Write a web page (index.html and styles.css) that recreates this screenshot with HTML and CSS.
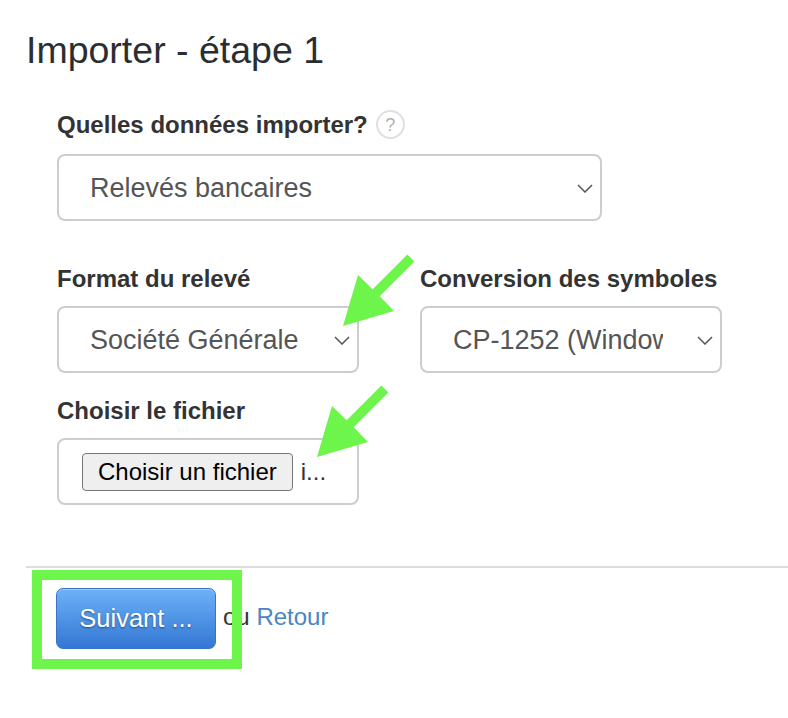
FILE: index.html
```html
<!DOCTYPE html>
<html lang="fr">
<head>
<meta charset="utf-8">
<title>Importer - étape 1</title>
<link rel="stylesheet" href="styles.css">
</head>
<body>
<div class="page">
  <h1 class="title">Importer - étape 1</h1>
  <form class="form">
    <div class="group group-first">
      <div class="label">Quelles données importer? <span class="help">?</span></div>
      <div class="select-wrap wide">
        <select class="select"><option>Relevés bancaires</option></select>
        <svg class="chev" viewBox="0 0 16 9" width="16" height="9"><path d="M1 1 L8 8 L15 1" fill="none" stroke="#555" stroke-width="1.5"/></svg>
      </div>
    </div>
    <div class="row">
      <div class="group col">
        <div class="label">Format du relevé</div>
        <div class="select-wrap">
          <select class="select"><option>Société Générale</option></select>
          <svg class="chev" viewBox="0 0 16 9" width="16" height="9"><path d="M1 1 L8 8 L15 1" fill="none" stroke="#555" stroke-width="1.5"/></svg>
        </div>
      </div>
      <div class="group col">
        <div class="label">Conversion des symboles</div>
        <div class="select-wrap">
          <select class="select"><option>CP-1252 (Windows-1252)</option></select>
          <svg class="chev" viewBox="0 0 16 9" width="16" height="9"><path d="M1 1 L8 8 L15 1" fill="none" stroke="#555" stroke-width="1.5"/></svg>
        </div>
      </div>
    </div>
    <div class="group">
      <div class="label">Choisir le fichier</div>
      <div class="file-box">
        <button type="button" class="file-btn">Choisir un fichier</button>
        <span class="file-name">i...</span>
      </div>
    </div>
  </form>
  <div class="divider"></div>
  <div class="actions">
    <button type="button" class="btn-primary">Suivant ...</button>
    <span class="or">ou <a href="#" class="link">Retour</a></span>
  </div>
</div>
<svg class="annot" width="788" height="718" viewBox="0 0 788 718">
  <g fill="#6ef54b">
    <polygon points="343,326 358,275 372.7,289.3 407.4,254.6 414.4,261.6 379.7,296.3 394,311"/>
    <polygon transform="translate(-26,131)" points="343,326 358,275 372.7,289.3 407.4,254.6 414.4,261.6 379.7,296.3 394,311"/>
  </g>
</svg>
<div class="highlight"></div>
</body>
</html>
```
FILE: styles.css
```css
html, body {
  margin: 0;
  padding: 0;
  background: #fff;
}
body {
  font-family: "Liberation Sans", Arial, sans-serif;
  position: relative;
  width: 788px;
  height: 718px;
  overflow: hidden;
}
.page {
  padding: 29px 0 0 26px;
}
.title {
  margin: 0;
  font-size: 37.5px;
  font-weight: 400;
  line-height: 42px;
  color: #2a2e33;
}
.form {
  margin-top: 39px;
  padding-left: 31px;
}
.label {
  display: flex;
  align-items: center;
  gap: 8px;
  font-size: 24px;
  font-weight: bold;
  line-height: 28px;
  color: #333;
  margin-bottom: 13px;
  white-space: nowrap;
}
.group-first .label {
  margin-bottom: 15px;
}
.help {
  display: inline-flex;
  align-items: center;
  justify-content: center;
  width: 29px;
  height: 29px;
  box-sizing: border-box;
  border: 2px solid #e0e0e0;
  border-radius: 50%;
  font-size: 18px;
  font-weight: normal;
  color: #b0b0b0;
}
.select-wrap {
  position: relative;
  width: 302px;
}
.select-wrap.wide {
  width: 545px;
}
.select {
  display: block;
  width: 100%;
  height: 67px;
  box-sizing: border-box;
  -webkit-appearance: none;
  appearance: none;
  border: 2px solid #cdcdcd;
  border-radius: 8px;
  background: #fff;
  font-family: "Liberation Sans", Arial, sans-serif;
  font-size: 27px;
  color: #555;
  padding: 0 57px 0 31px;
  outline: none;
}
.chev {
  position: absolute;
  right: 9px;
  top: 50%;
  margin-top: -4px;
}
.row {
  display: flex;
  gap: 61px;
  margin-top: 44px;
}
.col {
  width: 302px;
  margin-bottom: 24px;
}
.file-box {
  display: flex;
  align-items: center;
  gap: 8px;
  width: 302px;
  height: 67px;
  box-sizing: border-box;
  border: 2px solid #cdcdcd;
  border-radius: 8px;
  padding-left: 23px;
}
.file-btn {
  height: 38px;
  padding: 0 15px;
  font-family: "Liberation Sans", Arial, sans-serif;
  font-size: 24px;
  color: #000;
  background: #efefef;
  border: 1px solid #767676;
  border-radius: 4px;
}
.file-name {
  font-size: 24px;
  color: #333;
}
.divider {
  margin-top: 61px;
  border-top: 2px solid #dddddd;
}
.actions {
  display: flex;
  align-items: center;
  gap: 7px;
  margin-top: 20px;
  padding-left: 30px;
}
.btn-primary {
  width: 160px;
  height: 61px;
  box-sizing: border-box;
  border: 1px solid #3b73c2;
  border-radius: 7px;
  background: linear-gradient(#6cb1f7, #3477d4);
  color: #fff;
  font-family: "Liberation Sans", Arial, sans-serif;
  font-size: 25.5px;
  text-shadow: 0 1px 2px rgba(0, 0, 0, 0.45);
  box-shadow: inset 0 1px 0 rgba(255, 255, 255, 0.35);
}
.or {
  font-size: 24px;
  color: #333;
  margin-top: -4px;
}
.link {
  color: #4a85c5;
  text-decoration: none;
}
.annot {
  position: absolute;
  left: 0;
  top: 0;
  pointer-events: none;
}
.highlight {
  position: absolute;
  left: 32px;
  top: 570px;
  width: 210px;
  height: 99px;
  box-sizing: border-box;
  border: 10px solid #6ef54b;
  pointer-events: none;
}
```
